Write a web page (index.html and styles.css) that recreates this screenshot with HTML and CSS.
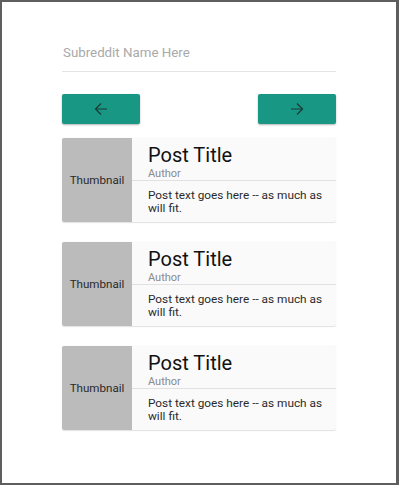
FILE: index.html
```html
<!DOCTYPE html>
<html>
<head>
<meta charset="utf-8">
<link rel="stylesheet" href="styles.css">
</head>
<body>
<div class="frame">
  <div class="content">
    <div class="field">
      <input class="subreddit" type="text" placeholder="Subreddit Name Here">
    </div>
    <div class="nav">
      <button class="nav-btn" aria-label="Previous">
        <svg width="16" height="16" viewBox="0 0 16 16"><path d="M14 8H2.5M8 2.5L2.5 8L8 13.5" fill="none" stroke="#1d3b36" stroke-width="1.2"/></svg>
      </button>
      <button class="nav-btn" aria-label="Next">
        <svg width="16" height="16" viewBox="0 0 16 16"><path d="M2 8H13.5M8 2.5L13.5 8L8 13.5" fill="none" stroke="#1d3b36" stroke-width="1.2"/></svg>
      </button>
    </div>
    <div class="posts">
      <div class="card">
        <div class="thumb">Thumbnail</div>
        <div class="body">
          <div class="head">
            <div class="title">Post Title</div>
            <div class="author">Author</div>
          </div>
          <div class="text">Post text goes here -- as much as will fit.</div>
        </div>
      </div>
      <div class="card">
        <div class="thumb">Thumbnail</div>
        <div class="body">
          <div class="head">
            <div class="title">Post Title</div>
            <div class="author">Author</div>
          </div>
          <div class="text">Post text goes here -- as much as will fit.</div>
        </div>
      </div>
      <div class="card">
        <div class="thumb">Thumbnail</div>
        <div class="body">
          <div class="head">
            <div class="title">Post Title</div>
            <div class="author">Author</div>
          </div>
          <div class="text">Post text goes here -- as much as will fit.</div>
        </div>
      </div>
    </div>
  </div>
</div>
</body>
</html>
```
FILE: styles.css
```css
html, body {
  margin: 0;
  padding: 0;
  background: #ffffff;
}
body {
  font-family: Roboto, "Noto Sans", sans-serif;
}
.frame {
  box-sizing: border-box;
  width: 399px;
  height: 485px;
  border: 2px solid #5e5e5e;
  border-right-width: 3px;
  background: #fff;
  padding: 35px 0 0 60px;
}
.content {
  width: 274px;
  display: flex;
  flex-direction: column;
}
.field {
  border-bottom: 1px solid #e4e4e4;
  height: 35px;
  box-sizing: border-box;
}
.subreddit {
  display: block;
  width: 100%;
  box-sizing: border-box;
  border: 0;
  outline: 0;
  padding: 0 0 3px 1px;
  margin: 0;
  height: 34px;
  font-family: Roboto, sans-serif;
  font-size: 13.3px;
  color: #333;
  background: transparent;
}
.subreddit::placeholder {
  color: #a9a9a9;
}
.nav {
  display: flex;
  justify-content: space-between;
  margin-top: 22px;
}
.nav-btn {
  width: 78px;
  height: 30px;
  border: 0;
  border-radius: 2px;
  background: #179784;
  box-shadow: 0 1px 2px rgba(0,0,0,0.3);
  display: flex;
  align-items: center;
  justify-content: center;
  padding: 0;
}
.nav-btn svg {
  display: block;
}
.posts {
  margin-top: 14px;
  display: flex;
  flex-direction: column;
  gap: 20px;
}
.card {
  display: flex;
  height: 84px;
  border-radius: 2px;
  overflow: hidden;
  background: #fafafa;
  box-shadow: 0 0.5px 1px rgba(0,0,0,0.12);
}
.thumb {
  width: 70px;
  flex: none;
  background: #bbbbbb;
  display: flex;
  align-items: center;
  justify-content: center;
  font-size: 11.6px;
  color: #2a2a2a;
}
.body {
  flex: 1;
  display: flex;
  flex-direction: column;
}
.head {
  padding: 6px 16px 0;
  border-bottom: 1px solid #e2e2e2;
}
.title {
  font-size: 20px;
  line-height: 23px;
  color: #111;
}
.author {
  font-size: 11px;
  line-height: 13px;
  color: #8a8a8a;
}
.text {
  padding: 8px 12px 0 16px;
  font-size: 11.8px;
  line-height: 13px;
  color: #2a2a2a;
}
```
